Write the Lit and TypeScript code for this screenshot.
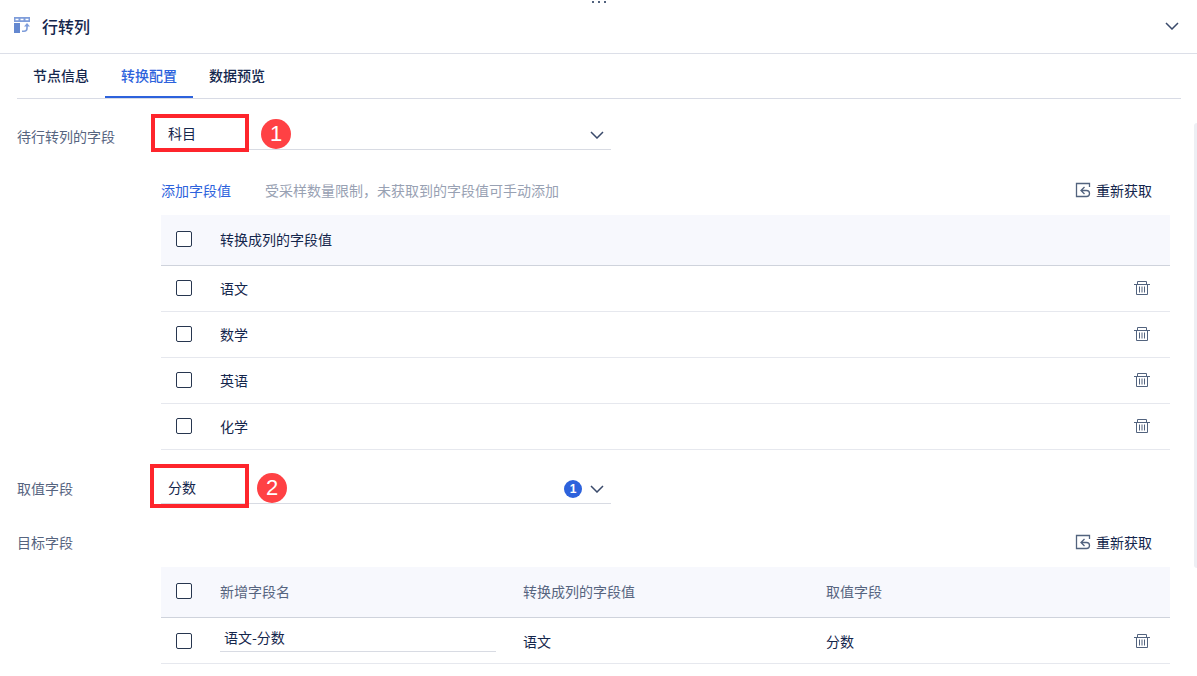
import { LitElement, html, css, svg } from "lit";
import { customElement, state } from "lit/decorators.js";

const chevron = html`<svg class="chevron" width="14" height="8" viewBox="0 0 14 8" fill="none" stroke="#3a4a6b" stroke-width="1.5" aria-hidden="true">${svg`<path d="M1 1l6 6 6-6" />`}</svg>`;

const trash = html`<svg width="16" height="16" viewBox="0 0 16 16" fill="none" stroke="#52637e" aria-hidden="true">
  ${svg`<path d="M0 4.5h16M3.500 4V1.500h9V4M2.500 5v9.500h11V5M5.500 6.500v6M8 6.500v6M10.500 6.500v6" />`}
</svg>`;

const refetch = html`<svg width="16" height="16" viewBox="0 0 16 16" fill="none" stroke="#52637e" stroke-width="1.3" aria-hidden="true">
  ${svg`<path d="M14.500 5V1.500h-13v13h10a3 3 0 0 0 3-3 3 3 0 0 0-3-3H6M9.500 5L6 8.500 9.500 12" />`}
</svg>`;

const nodeIcon = html`<svg width="17" height="17" viewBox="0 0 17 17" aria-hidden="true">
  ${svg`<path fill="#7f9dda" fill-rule="evenodd" d="M1 0h16v5H1zM2.500 1.700v1.600h3V1.700zM7.500 1.700v1.600h3V1.700zM12.500 1.700v1.600h3V1.700z" />
  <path fill="#6488d0" d="M1 6h6v10H1z" />
  <path fill="none" stroke="#7f9dda" stroke-width="1.6" d="M9 14.200h2q3 0 3-3V8" />
  <path fill="#7f9dda" d="M11 9.500l3-3.500 3 3.500z" />`}
</svg>`;

@customElement("app-root")
export class AppRoot extends LitElement {
  @state() private tab = 1;

  private tabs = ["节点信息", "转换配置", "数据预览"];
  private values = ["语文", "数学", "英语", "化学"];

  static styles = css`
    :host {
      display: block;
      position: relative;
      background: #fff;
      color: #14264c;
      font: 14px/20px "Noto Sans CJK SC", sans-serif;
    }
    * { box-sizing: border-box; }
    button, input, select { font: inherit; color: inherit; margin: 0; }
    button { border: 0; padding: 0; background: none; cursor: pointer; }
    svg { display: block; flex: none; }
    .handle {
      position: absolute; top: 0; left: 50%;
      transform: translateX(-50%);
      display: flex; gap: 4px; padding-top: 1px;
    }
    .dot { width: 2px; height: 2px; background: #52637e; }
    .header {
      display: flex; align-items: center; gap: 12px;
      height: 54px; padding: 0 18px 2px 13px;
      border-bottom: 1px solid #dcdfe8;
    }
    .title { flex: 1; margin: 0; font-size: 16px; font-weight: 500; line-height: 24px; }
    .tabs { display: flex; margin: 0 16px 0 17px; border-bottom: 1px solid #d8dbe5; }
    .tab {
      height: 44px; padding: 0 16px 1px;
      border-bottom: 2px solid transparent; font-weight: 500;
    }
    .tab.active { color: #2d62dc; border-color: #2d62dc; }
    .form { padding: 20px 27px 12px 17px; }
    .row { display: grid; grid-template-columns: 144px minmax(0, 1fr); }
    .row.value { margin-top: 23px; }
    .label { color: #56647f; line-height: 34px; }
    .row.value .label { line-height: 31px; }
    .row.target .label { line-height: 46px; }
    .field { position: relative; width: 450px; max-width: 100%; }
    .select {
      display: block; appearance: none; width: 100%; height: 31px;
      padding: 0 32px 2px 7px; border: 0; border-bottom: 1px solid #d8dbe3;
      border-radius: 0; background: none; outline: none;
    }
    .suffix {
      position: absolute; top: 0; right: 7px; height: 31px;
      display: flex; align-items: center; gap: 8px; pointer-events: none;
    }
    .count {
      width: 18px; height: 18px; border-radius: 50%; background: #2d62dc; color: #fff;
      font: bold 12px/18px "Liberation Sans", sans-serif; text-align: center;
    }
    .mark {
      position: absolute; top: -5px; left: -10px; width: 98px; height: 38px;
      border: 4px solid #fe252c; pointer-events: none;
    }
    .mark.second { top: -9px; left: -11px; width: 99px; height: 44px; }
    .step {
      position: absolute; top: 0; left: 100px; width: 30px; height: 30px;
      border-radius: 50%; background: #ff4144; color: #fff;
      font: 22px/30px "Liberation Sans", sans-serif; text-align: center;
    }
    .step.second { left: 96px; }
    .actions { display: flex; align-items: center; height: 48px; margin-top: 17px; padding: 0 18px 2px 0; }
    .row.target { margin-top: 15px; }
    .row.target .actions { margin-top: 0; }
    .add { color: #2d62dc; }
    .hint { margin-left: 34px; color: #98a1b3; }
    .refetch { display: flex; align-items: center; gap: 5px; margin-left: auto; }
    table { width: 100%; border-collapse: separate; border-spacing: 0; table-layout: fixed; }
    th, td { padding: 0 0 2px; text-align: left; font-weight: 400; vertical-align: middle; }
    th { height: 51px; background: #f7f8fd; border-bottom: 1px solid #cfd3dc; }
    td { height: 46px; border-bottom: 1px solid #e6e8ee; }
    .muted th { color: #56647f; }
    .pick { width: 59px; padding-left: 15px; }
    .mid { width: 303px; }
    .tools { width: 36px; }
    .check {
      display: block; appearance: none; width: 16px; height: 16px;
      border: 1px solid #27364f; border-radius: 2px; background: #fff;
    }
    .check:checked { background: #2d62dc; border-color: #2d62dc; }
    .trash { display: block; }
    .name {
      display: block; width: 276px; height: 27px; padding: 0 4px 2px; border: 0;
      border-bottom: 1px solid #d8dbe3; border-radius: 0; background: none; outline: none;
    }
    .edit { padding-bottom: 5px; }
    .muted td { padding-bottom: 0; }
    .muted td.edit { padding-bottom: 4px; }
    .scroll {
      position: absolute; top: 123px; right: 0; width: 3px; height: 445px;
      border-radius: 3px 0 0 3px; background: #edeff4;
    }
  `;

  private check(label: string) {
    return html`<input class="check" type="checkbox" aria-label=${label} />`;
  }

  private remove(label: string) {
    return html`<button class="trash" aria-label=${"删除" + label}>${trash}</button>`;
  }

  render() {
    return html`
      <div class="handle"><span class="dot"></span><span class="dot"></span><span class="dot"></span></div>
      <header class="header">
        ${nodeIcon}
        <h1 class="title">行转列</h1>
        <button aria-label="收起">${chevron}</button>
      </header>
      <nav class="tabs">
        ${this.tabs.map((t, i) => html`<button class="tab ${i === this.tab ? "active" : ""}" @click=${() => (this.tab = i)}>${t}</button>`)}
      </nav>
      <main class="form">
        <section class="row">
          <label class="label" for="source">待行转列的字段</label>
          <div>
            <div class="field">
              <select class="select" id="source"><option>科目</option></select>
              <span class="suffix">${chevron}</span>
              <span class="mark"></span><span class="step">1</span>
            </div>
            <div class="actions">
              <button class="add">添加字段值</button>
              <span class="hint">受采样数量限制，未获取到的字段值可手动添加</span>
              <button class="refetch">${refetch}重新获取</button>
            </div>
            <table>
              <thead>
                <tr><th class="pick">${this.check("全选")}</th><th>转换成列的字段值</th><th class="tools"></th></tr>
              </thead>
              <tbody>
                ${this.values.map((v) => html`<tr><td class="pick">${this.check(v)}</td><td>${v}</td><td class="tools">${this.remove(v)}</td></tr>`)}
              </tbody>
            </table>
          </div>
        </section>
        <section class="row value">
          <label class="label" for="value">取值字段</label>
          <div class="field">
            <select class="select" id="value"><option>分数</option></select>
            <span class="suffix"><span class="count">1</span>${chevron}</span>
            <span class="mark second"></span><span class="step second">2</span>
          </div>
        </section>
        <section class="row target">
          <span class="label">目标字段</span>
          <div>
            <div class="actions"><button class="refetch">${refetch}重新获取</button></div>
            <table class="muted">
              <thead>
                <tr><th class="pick">${this.check("全选")}</th><th class="mid">新增字段名</th><th class="mid">转换成列的字段值</th><th>取值字段</th><th class="tools"></th></tr>
              </thead>
              <tbody>
                <tr>
                  <td class="pick">${this.check("语文-分数")}</td>
                  <td class="edit"><input class="name" type="text" aria-label="新增字段名" value="语文-分数" /></td>
                  <td>语文</td><td>分数</td>
                  <td class="tools">${this.remove("语文-分数")}</td>
                </tr>
              </tbody>
            </table>
          </div>
        </section>
      </main>
      <div class="scroll"></div>
    `;
  }
}
